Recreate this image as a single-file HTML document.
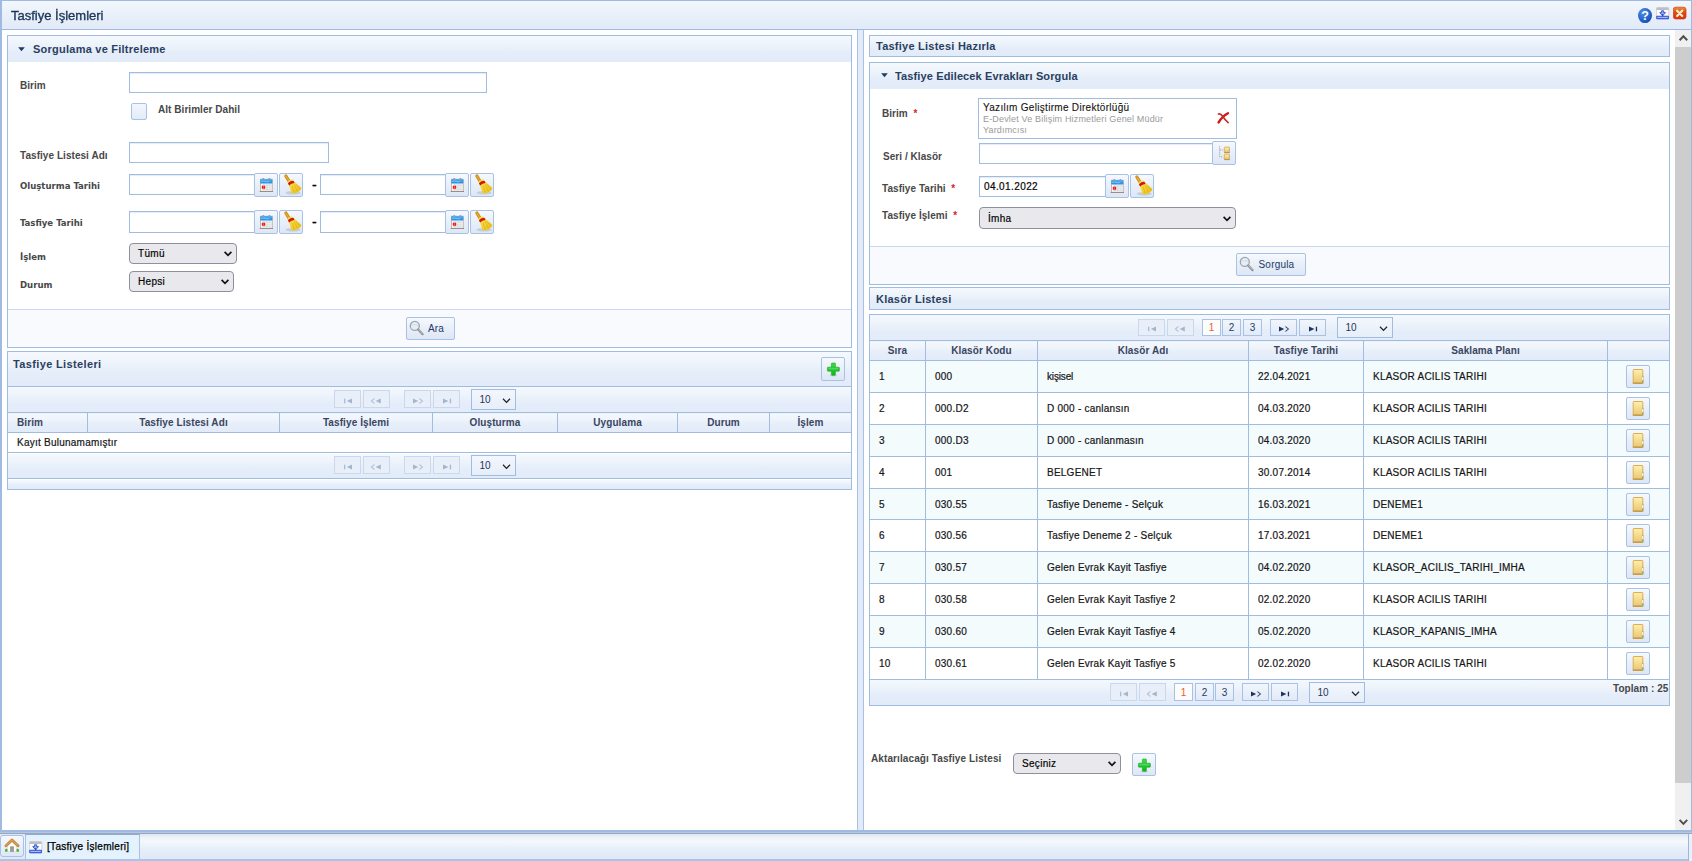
<!DOCTYPE html>
<html lang="tr">
<head>
<meta charset="utf-8">
<title>Tasfiye İşlemleri</title>
<style>
*{box-sizing:border-box;}
html,body{margin:0;padding:0;}
body{width:1692px;height:861px;overflow:hidden;background:#fff;position:relative;
 font-family:"Liberation Sans",Arial,sans-serif;font-size:10px;color:#222;}
.abs{position:absolute;}
/* window frame */
#win{position:absolute;left:0;top:0;width:1692px;height:832px;border:2px solid #a1bbe0;border-top-width:1px;border-right-width:1px;border-bottom-width:2px;background:#fff;}
#titlebar{position:absolute;left:2px;top:1px;width:1689px;height:29px;border-bottom:1px solid #9db9e2;
 background:linear-gradient(#f3f7fd 0%,#e9f0fa 50%,#e1eaf7 100%);}
#title{position:absolute;left:11px;top:8px;font-size:13px;line-height:16px;color:#1c3557;-webkit-text-stroke:0.35px #1c3557;will-change:transform;}
/* panels */
.panel{position:absolute;border:1px solid #a1bce1;background:#fff;}
.phead{position:absolute;left:0;top:0;right:0;background:linear-gradient(#f5f9fd 0%,#eef4fb 30%,#e4edf9 62%,#e2ecf8 100%);}
.ptitle{position:absolute;font-weight:bold;font-size:11px;color:#2a3f5f;white-space:nowrap;letter-spacing:0.24px;}
.tri{position:absolute;width:0;height:0;border-left:4px solid transparent;border-right:4px solid transparent;border-top:4px solid #2a4a7a;}
.lbl{position:absolute;font-weight:bold;font-size:10px;letter-spacing:0.05px;color:#484848;white-space:nowrap;line-height:13px;}
.lbl2{position:absolute;font-family:"DejaVu Sans Condensed","DejaVu Sans",sans-serif;font-weight:bold;font-size:9.5px;color:#484848;white-space:nowrap;line-height:13px;}
.inp{position:absolute;border:1px solid #a1bce1;background:#fff;box-shadow:inset 0 1px 1px #e4ecf7;}
.btn{position:absolute;border:1px solid #a9c1e4;border-radius:2px;background:linear-gradient(#f6f9fe 0%,#e8eff9 50%,#dde7f5 100%);}
.sel{position:absolute;border:1px solid #8f8f9d;border-radius:4px;background:#e9e9ed;font-size:10px;letter-spacing:0.3px;color:#000;-webkit-text-stroke:0.2px #111;white-space:nowrap;}
.sel span{position:absolute;top:0;line-height:19px;}
.sel svg{position:absolute;}
.pgsel{position:absolute;border:1px solid #a1bce1;background:linear-gradient(#f3f7fd,#e6eef9);font-size:10px;letter-spacing:0px;color:#26375a;}
.req{color:#d22;font-weight:bold;}
.foot{position:absolute;background:#f8fafd;border-top:1px solid #c9d8ee;}
.pbar{position:absolute;background:linear-gradient(#f5f9fd 0%,#eef4fb 30%,#e4edf9 62%,#e2ecf8 100%);}
.pgb{position:absolute;width:27px;height:18px;border:1px solid #c9d8ee;background:#e8eff9;}
.pgb.on{border-color:#a9c1e4;background:linear-gradient(#f1f6fc,#e1eaf7);}
.pgn{position:absolute;width:19px;height:17px;border:1px solid #a9c1e4;background:linear-gradient(#f1f6fc,#e1eaf7);font-size:10px;line-height:14px;text-align:center;color:#1e3a66;overflow:hidden;}
table.grid{position:absolute;border-collapse:collapse;table-layout:fixed;font-size:10px;}
table.grid th{border:1px solid #a1bce1;background:linear-gradient(#f5f9fd 0%,#eef4fb 30%,#e4edf9 62%,#e2ecf8 100%);font-weight:bold;color:#3a4560;text-align:center;padding:0;height:20px;font-size:10px;letter-spacing:0.1px;}
table.grid td{border:1px solid #a1bce1;padding:0 0 0 9px;color:#111;-webkit-text-stroke:0.2px #222;white-space:nowrap;letter-spacing:0.24px;}
</style>
</head>
<body>
<svg width="0" height="0" style="position:absolute">
<defs>
<linearGradient id="g-calblue" x1="0" y1="0" x2="0" y2="1"><stop offset="0" stop-color="#4fb0f5"/><stop offset="1" stop-color="#1f8be6"/></linearGradient>
<linearGradient id="g-fold" x1="0" y1="0" x2="0" y2="1"><stop offset="0" stop-color="#fff0a8"/><stop offset="1" stop-color="#e9c671"/></linearGradient>
<linearGradient id="g-plus" x1="0" y1="0" x2="0" y2="1"><stop offset="0" stop-color="#43d94d"/><stop offset="1" stop-color="#0fb51c"/></linearGradient>
<linearGradient id="g-broom" x1="0" y1="0" x2="1" y2="1"><stop offset="0" stop-color="#ffe85a"/><stop offset="1" stop-color="#e8b80e"/></linearGradient>
<radialGradient id="g-help" cx="0.35" cy="0.3" r="0.8"><stop offset="0" stop-color="#4f8fe6"/><stop offset="1" stop-color="#0f47b8"/></radialGradient>
<linearGradient id="g-close" x1="0" y1="0" x2="0" y2="1"><stop offset="0" stop-color="#f0902e"/><stop offset="0.45" stop-color="#e04a0c"/><stop offset="1" stop-color="#e62c00"/></linearGradient>
<!-- calendar: 24x24 button coords -->
<g id="ic-cal" transform="translate(-0.8,-1)">
 <rect x="5.6" y="18" width="13" height="1" fill="#6b5650"/>
 <rect x="6.2" y="6.2" width="11.8" height="12" fill="#fdfdfd" stroke="#b39c98" stroke-width="0.7"/>
 <rect x="6" y="6" width="12.2" height="4.6" rx="0.8" fill="url(#g-calblue)"/>
 <path d="M7 8.6 Q9 7.4 11 8.4 T15 8.2" stroke="#9fd4fb" stroke-width="0.7" fill="none"/>
 <rect x="8.3" y="5" width="1.6" height="2.8" rx="0.6" fill="#8b9bb0"/>
 <rect x="14.4" y="5" width="1.6" height="2.8" rx="0.6" fill="#8b9bb0"/>
 <rect x="8.3" y="11.4" width="8.9" height="5.8" fill="#cfd5d5"/>
 <path d="M11.3 11.4V17.2M14 11.4V17.2M16 11.4V17.2M8.3 13.3H17.2M8.3 15.2H17.2" stroke="#f4f6f6" stroke-width="0.7"/>
 <rect x="7.6" y="12.8" width="3.4" height="3" rx="0.6" fill="#f01818"/>
 <path d="M9.3 12.8V15.8" stroke="#ff8a8a" stroke-width="0.5"/>
</g>
<!-- broom -->
<g id="ic-broom" transform="translate(-0.3,-1)">
 <ellipse cx="13.5" cy="19.8" rx="7.5" ry="1.8" fill="#9aa4b4" opacity="0.4"/>
 <path d="M6.2 3 L9.6 8.6" stroke="#cf8d18" stroke-width="3.2" stroke-linecap="round"/>
 <path d="M6.2 3 L9.4 8.2" stroke="#e6ae42" stroke-width="1.1" stroke-linecap="round"/>
 <path d="M8.6 10.4 L13.6 7.8 L21.6 14.8 Q21.8 17 18 19 Q14.5 20.8 12 20.6 Z" fill="url(#g-broom)"/>
 <path d="M12.2 12.5 L14.5 19.6 M14.4 11.5 L18 18.6 M16 11 L20.6 16.6" stroke="#d9a90c" stroke-width="0.6" fill="none"/>
 <path d="M7.6 8.8 Q10 6.4 12.8 6.6 L13.3 7.9 Q10.6 8 8.4 10.2 Z" fill="#f2dc3a"/>
 <path d="M8.2 10.2 Q10.8 7.8 13.8 7.8 L14.8 10 Q11.6 10.2 9.4 12.6 Z" fill="#d21414"/>
</g>
<!-- magnifier 18x18 -->
<g id="ic-mag">
 <circle cx="6.8" cy="6.9" r="4.5" fill="#e3eefb" stroke="#a3a3a3" stroke-width="1.3"/>
 <path d="M3.6 6.4 Q6.8 4.6 10 6.4" fill="none" stroke="#c3d6ee" stroke-width="0.8"/>
 <path d="M10.2 10.4 L14.6 15.2" stroke="#8d8d8d" stroke-width="2.2" stroke-linecap="round"/>
 <path d="M10.6 10.6 L14.4 14.8" stroke="#c9c9c9" stroke-width="0.8" stroke-linecap="round"/>
</g>
<!-- plus 24x -->
<g id="ic-plus">
 <ellipse cx="11.4" cy="17.6" rx="3.8" ry="0.7" fill="#8e98aa" opacity="0.55"/>
 <path d="M9.4 5.6 Q9.4 5 10 5 H12.8 Q13.4 5 13.4 5.6 V9.2 H16.8 Q17.4 9.2 17.4 9.8 V12.6 Q17.4 13.2 16.8 13.2 H13.4 V16.6 Q13.4 17.2 12.8 17.2 H10 Q9.4 17.2 9.4 16.6 V13.2 H6 Q5.4 13.2 5.4 12.6 V9.8 Q5.4 9.2 6 9.2 H9.4 Z" fill="url(#g-plus)" stroke="#17a824" stroke-width="0.6"/>
 <path d="M6.6 10.8 H16.2" stroke="#7be884" stroke-width="0.8" opacity="0.8"/>
</g>
<!-- folder/file 24x23 -->
<g id="ic-fold" transform="translate(-1.2,-1)">
 <rect x="6.4" y="17.6" width="12" height="1.2" fill="#8e96a4" opacity="0.35"/>
 <rect x="7.4" y="4.5" width="9.6" height="14" rx="0.6" fill="url(#g-fold)" stroke="#d8a64c" stroke-width="0.9"/>
 <path d="M7.4 18 H17" stroke="#b98a34" stroke-width="0.9"/>
 <path d="M16 11.6 Q17 9.6 17.9 11.6 V17.4 H16 Z" fill="#d6b06a"/>
 <rect x="16.4" y="12" width="1" height="3.6" fill="#fff"/>
 <rect x="16.3" y="15.4" width="1.2" height="1.8" fill="#45b8d8"/>
</g>
<!-- tree 24x24 -->
<g id="ic-tree" transform="translate(-0.9,-1.3)">
 <path d="M7.6 5.6 V16.2 H11 M7.6 9.2 H11" stroke="#8f8f8f" stroke-width="0.9" stroke-dasharray="1 1" fill="none"/>
 <rect x="12.2" y="6.4" width="5.2" height="5.2" rx="0.5" fill="url(#g-fold)" stroke="#d8a64c" stroke-width="0.8"/>
 <rect x="12.2" y="13.4" width="5.2" height="5.2" rx="0.5" fill="url(#g-fold)" stroke="#d8a64c" stroke-width="0.8"/>
 <path d="M12 11.8 H17.8 M12 18.9 H17.8" stroke="#b98a34" stroke-width="0.8"/>
 <rect x="16.4" y="9" width="1" height="2" fill="#8fd2e4"/><rect x="16.4" y="16" width="1" height="2" fill="#8fd2e4"/>
</g>
<!-- red x 14x14 -->
<g id="ic-redx">
 <path d="M2.6 11.4 Q6 5.4 12 2.2" fill="none" stroke="#d11a1a" stroke-width="2.4" stroke-linecap="round"/>
 <path d="M2.4 3 Q4.6 2.2 6.4 5 Q9 9 12.2 11.6" fill="none" stroke="#c62a2a" stroke-width="1.6" stroke-linecap="round"/>
</g>
<!-- help 16x17 -->
<g id="ic-help">
 <ellipse cx="8" cy="8.6" rx="7" ry="7.5" fill="url(#g-help)"/>
 <text x="8" y="13" text-anchor="middle" font-family="Liberation Sans, sans-serif" font-weight="bold" font-size="12.5" fill="#fff">?</text>
</g>
<!-- minimize 14x13 -->
<g id="ic-min">
 <rect x="0.4" y="0.4" width="12.4" height="11.6" rx="1.2" fill="#fdfdfe" stroke="#c4c6cc" stroke-width="0.7"/>
 <path d="M0.6 1.4 Q0.6 0.4 1.6 0.4 H11.6 Q12.6 0.4 12.6 1.4 V3 H0.6 Z" fill="#bdbec4"/>
 <path d="M5.5 3.8 H7.7 V5.6 H9.5 L6.6 8.9 L3.7 5.6 H5.5 Z" fill="#8fa6ee" stroke="#3457cc" stroke-width="0.9" stroke-linejoin="round"/>
 <rect x="0.2" y="8.8" width="12.8" height="3.4" rx="0.8" fill="#3d5de0"/>
 <path d="M6.6 7.2 L6.6 9.4" stroke="#1e3bb8" stroke-width="1"/>
 <path d="M1.4 10.4 H11.8" stroke="#eef1ff" stroke-width="0.7"/>
</g>
<!-- close 14x14 -->
<g id="ic-close">
 <rect x="0.3" y="1.2" width="12.7" height="11.8" rx="2.4" fill="url(#g-close)" stroke="#d43220" stroke-width="0.7"/>
 <path d="M4.1 4.8 L9.2 10 M9.2 4.8 L4.1 10" stroke="#f1efd2" stroke-width="2.3" stroke-linecap="round"/>
</g>
<!-- home 24x22 (button-relative incl. border offset) -->
<g id="ic-home">
 <path d="M4 14.2 Q4 12.8 5.6 12.8 Q7.4 12.8 7.6 14.4 V15.8 H4 Z" fill="#4caf3c"/>
 <path d="M14.4 14.4 Q14.6 12.8 16.4 12.8 Q18 12.8 18 14.2 V15.8 H14.4 Z" fill="#4caf3c"/>
 <path d="M6.6 9.4 L11 5.6 L15.4 9.4 V15.8 H6.6 Z" fill="#fbfbf8" stroke="#c9c9c4" stroke-width="0.4"/>
 <rect x="9.2" y="10.4" width="3.6" height="5.4" fill="#8d8d8d"/>
 <rect x="9.8" y="11.4" width="2.4" height="4.4" fill="#9e9e9e"/>
 <path d="M5 9.8 L11 4 L17 9.8" fill="none" stroke="#c8873a" stroke-width="2.8" stroke-linejoin="round" stroke-linecap="round"/>
 <path d="M5.2 9.4 L11 3.9 L16.8 9.4" fill="none" stroke="#ecc58b" stroke-width="0.8" stroke-linejoin="round" stroke-dasharray="1.2 0.5"/>
</g>
<!-- paginator glyphs 27x18 -->
<g id="pg-first"><rect x="10.1" y="8.7" width="1.2" height="4.6"/><path d="M18 8.4 V13.6 L12.8 11 Z"/></g>
<g id="pg-prev"><path d="M12.2 8.5 L9.2 11 L12.2 13.5 L10.6 13.5 L7.6 11 L10.6 8.5 Z" opacity="0.85"/><path d="M17.8 8.4 V13.6 L12.6 11 Z"/></g>
<g id="pg-next"><path d="M9 8.4 V13.6 L14.2 11 Z"/><path d="M14.6 8.5 L17.6 11 L14.6 13.5 L16.2 13.5 L19.2 11 L16.2 8.5 Z" opacity="0.85"/></g>
<g id="pg-last"><path d="M10 8.4 V13.6 L15.4 11 Z"/><rect x="16.8" y="8.7" width="1.3" height="4.6"/></g>
</defs>
</svg>
<div id="win"></div>
<div id="titlebar"></div>
<div id="title">Tasfiye İşlemleri</div>
<!-- ===== LEFT: Sorgulama ve Filtreleme ===== -->
<div class="panel" style="left:7px;top:35px;width:845px;height:313px;">
  <div class="phead" style="height:26px;"></div>
  <svg class="abs" style="left:9.5px;top:11px;" width="8" height="6" viewBox="0 0 8 6"><path d="M0.2 0.3 H6.8 L3.5 4.3 Z" fill="#1e3a66"/></svg>
  <div class="ptitle" style="left:25px;top:6px;line-height:14px;">Sorgulama ve Filtreleme</div>
  <div class="foot" style="left:0;right:0;top:273px;height:38px;"></div>
</div>
<div class="lbl" style="left:20px;top:79px;">Birim</div>
<div class="inp" style="left:129px;top:72px;width:358px;height:21px;"></div>
<div class="abs" style="left:131px;top:103px;width:16px;height:17px;border:1px solid #a9c1e4;border-radius:2px;background:linear-gradient(#f3f7fd,#e2ebf8);"></div>
<div class="lbl" style="left:158px;top:103px;">Alt Birimler Dahil</div>
<div class="lbl" style="left:20px;top:149px;">Tasfiye Listesi Adı</div>
<div class="inp" style="left:129px;top:142px;width:200px;height:21px;"></div>

<div class="lbl2" style="left:20px;top:179px;">Oluşturma Tarihi</div>
<div class="inp" style="left:129px;top:174px;width:126px;height:21px;"></div>
<div class="btn cal" style="left:254px;top:173px;width:24px;height:24px;"><svg class="i-cal" width="24" height="24" viewBox="0 0 24 24"><use href="#ic-cal"/></svg></div>
<div class="btn" style="left:279px;top:173px;width:24px;height:24px;"><svg width="24" height="24" viewBox="0 0 24 24"><use href="#ic-broom"/></svg></div>
<div class="abs" style="left:312px;top:177.5px;font-size:14px;line-height:14px;color:#000;-webkit-text-stroke:0.3px #000;">-</div>
<div class="inp" style="left:320px;top:174px;width:126px;height:21px;"></div>
<div class="btn" style="left:445px;top:173px;width:24px;height:24px;"><svg width="24" height="24" viewBox="0 0 24 24"><use href="#ic-cal"/></svg></div>
<div class="btn" style="left:470px;top:173px;width:24px;height:24px;"><svg width="24" height="24" viewBox="0 0 24 24"><use href="#ic-broom"/></svg></div>

<div class="lbl2" style="left:20px;top:216px;">Tasfiye Tarihi</div>
<div class="inp" style="left:129px;top:211px;width:126px;height:22px;"></div>
<div class="btn" style="left:254px;top:210px;width:24px;height:24px;"><svg width="24" height="24" viewBox="0 0 24 24"><use href="#ic-cal"/></svg></div>
<div class="btn" style="left:279px;top:210px;width:24px;height:24px;"><svg width="24" height="24" viewBox="0 0 24 24"><use href="#ic-broom"/></svg></div>
<div class="abs" style="left:312px;top:215px;font-size:14px;line-height:14px;color:#000;-webkit-text-stroke:0.3px #000;">-</div>
<div class="inp" style="left:320px;top:211px;width:126px;height:22px;"></div>
<div class="btn" style="left:445px;top:210px;width:24px;height:24px;"><svg width="24" height="24" viewBox="0 0 24 24"><use href="#ic-cal"/></svg></div>
<div class="btn" style="left:470px;top:210px;width:24px;height:24px;"><svg width="24" height="24" viewBox="0 0 24 24"><use href="#ic-broom"/></svg></div>

<div class="lbl2" style="left:20px;top:250px;">İşlem</div>
<div class="sel" style="left:129px;top:243px;width:108px;height:21px;"><span style="left:8px;">Tümü</span><svg style="right:4px;top:7px;" width="8" height="6" viewBox="0 0 8 6"><path d="M0.6 0.9 L4 4.3 L7.4 0.9" fill="none" stroke="#111" stroke-width="1.7"/></svg></div>
<div class="lbl2" style="left:20px;top:278px;">Durum</div>
<div class="sel" style="left:129px;top:271px;width:105px;height:21px;"><span style="left:8px;line-height:19px;">Hepsi</span><svg style="right:4px;top:7px;" width="8" height="6" viewBox="0 0 8 6"><path d="M0.6 0.9 L4 4.3 L7.4 0.9" fill="none" stroke="#111" stroke-width="1.7"/></svg></div>

<div class="btn" style="left:406px;top:317px;width:49px;height:23px;"><svg class="abs" style="left:1.2px;top:1.2px;" width="18" height="18" viewBox="0 0 18 18"><use href="#ic-mag"/></svg><span class="abs" style="left:21px;top:4px;line-height:13px;color:#1e3a66;letter-spacing:0.1px;">Ara</span></div>

<!-- ===== LEFT: Tasfiye Listeleri ===== -->
<div class="panel" style="left:7px;top:351px;width:845px;height:139px;">
  <div class="phead" style="height:35px;border-bottom:1px solid #a1bce1;"></div>
  <div class="ptitle" style="left:5px;top:5px;line-height:14px;letter-spacing:0.36px;">Tasfiye Listeleri</div>
  <div class="pbar" style="left:0;right:0;top:35px;height:26px;"></div>
  <div class="pbar" style="left:0;right:0;top:102px;height:25px;border-bottom:1px solid #a1bce1;"></div>
  <div class="pbar" style="left:0;right:0;top:128px;height:9px;"></div>
</div>
<div class="btn" style="left:821px;top:357px;width:24px;height:24px;"><svg width="24" height="24" viewBox="0 0 24 24"><use href="#ic-plus"/></svg></div>

<table class="grid" style="left:7px;top:412px;width:844px;">
<colgroup><col style="width:80px"><col style="width:192px"><col style="width:153px"><col style="width:125px"><col style="width:120px"><col style="width:92px"><col style="width:82px"></colgroup>
<tr><th style="text-align:left;padding-left:9px;">Birim</th><th>Tasfiye Listesi Adı</th><th>Tasfiye İşlemi</th><th>Oluşturma</th><th>Uygulama</th><th>Durum</th><th>İşlem</th></tr>
<tr><td colspan="7" style="height:20px;background:#fff;padding-left:9px;">Kayıt Bulunamamıştır</td></tr>
</table>

<div class="pgb" style="left:334px;top:390px;height:18px;"><svg class="abs" style="left:-1px;top:-1px;" width="27" height="18" viewBox="0 0 27 18"><use href="#pg-first" fill="#a6b5cd"/></svg></div>
<div class="pgb" style="left:363px;top:390px;height:18px;"><svg class="abs" style="left:-1px;top:-1px;" width="27" height="18" viewBox="0 0 27 18"><use href="#pg-prev" fill="#a6b5cd"/></svg></div>
<div class="pgb" style="left:404px;top:390px;height:18px;"><svg class="abs" style="left:-1px;top:-1px;" width="27" height="18" viewBox="0 0 27 18"><use href="#pg-next" fill="#a6b5cd"/></svg></div>
<div class="pgb" style="left:433px;top:390px;height:18px;"><svg class="abs" style="left:-1px;top:-1px;" width="27" height="18" viewBox="0 0 27 18"><use href="#pg-last" fill="#a6b5cd"/></svg></div>
<div class="pgsel" style="left:471px;top:389px;width:45px;height:21px;"><span class="abs" style="left:7.5px;top:0;line-height:20px;">10</span><svg class="abs" style="right:4px;top:8px;" width="9" height="6" viewBox="0 0 9 6"><path d="M1 0.8 L4.5 4.4 L8 0.8" fill="none" stroke="#222" stroke-width="1.25"/></svg></div>
<div class="pgb" style="left:334px;top:456px;height:18px;"><svg class="abs" style="left:-1px;top:-1px;" width="27" height="18" viewBox="0 0 27 18"><use href="#pg-first" fill="#a6b5cd"/></svg></div>
<div class="pgb" style="left:363px;top:456px;height:18px;"><svg class="abs" style="left:-1px;top:-1px;" width="27" height="18" viewBox="0 0 27 18"><use href="#pg-prev" fill="#a6b5cd"/></svg></div>
<div class="pgb" style="left:404px;top:456px;height:18px;"><svg class="abs" style="left:-1px;top:-1px;" width="27" height="18" viewBox="0 0 27 18"><use href="#pg-next" fill="#a6b5cd"/></svg></div>
<div class="pgb" style="left:433px;top:456px;height:18px;"><svg class="abs" style="left:-1px;top:-1px;" width="27" height="18" viewBox="0 0 27 18"><use href="#pg-last" fill="#a6b5cd"/></svg></div>
<div class="pgsel" style="left:471px;top:455px;width:45px;height:21px;"><span class="abs" style="left:7.5px;top:0;line-height:20px;">10</span><svg class="abs" style="right:4px;top:8px;" width="9" height="6" viewBox="0 0 9 6"><path d="M1 0.8 L4.5 4.4 L8 0.8" fill="none" stroke="#222" stroke-width="1.25"/></svg></div>

<!-- splitter -->
<div class="abs" style="left:857px;top:30px;width:7px;height:800px;background:#e2ebf7;border-left:1px solid #a9c1e4;border-right:1px solid #a9c1e4;"></div>
<!-- scrollbar -->
<div class="abs" style="left:1675px;top:30px;width:16px;height:800px;background:#f0f0f0;"></div>
<div class="abs" style="left:1675px;top:47px;width:16px;height:736px;background:#cdcdcd;"></div>
<svg class="abs" style="left:1675px;top:30px;" width="16" height="17" viewBox="0 0 16 17"><path d="M4.6 10.3 L8.4 6.3 L12.2 10.3" fill="none" stroke="#505050" stroke-width="2"/></svg>
<svg class="abs" style="left:1675px;top:813px;" width="16" height="17" viewBox="0 0 16 17"><path d="M4.6 6.9 L8.4 10.9 L12.2 6.9" fill="none" stroke="#505050" stroke-width="2"/></svg>

<!-- ===== RIGHT: Tasfiye Listesi Hazırla ===== -->
<div class="panel" style="left:869px;top:35px;width:801px;height:22px;">
  <div class="phead" style="height:20px;"></div>
  <div class="ptitle" style="left:6px;top:3px;line-height:14px;">Tasfiye Listesi Hazırla</div>
</div>
<div class="panel" style="left:869px;top:62px;width:801px;height:223px;">
  <div class="phead" style="height:26px;"></div>
  <svg class="abs" style="left:10.5px;top:10px;" width="8" height="6" viewBox="0 0 8 6"><path d="M0.2 0.3 H6.8 L3.5 4.3 Z" fill="#1e3a66"/></svg>
  <div class="ptitle" style="left:25px;top:6px;line-height:14px;letter-spacing:0.13px;">Tasfiye Edilecek Evrakları Sorgula</div>
  <div class="foot" style="left:0;right:0;top:183px;height:38px;"></div>
</div>
<div class="lbl" style="left:882px;top:107px;">Birim&nbsp; <span class="req">*</span></div>
<div class="inp" style="left:978px;top:98px;width:259px;height:41px;box-shadow:none;"></div>
<div class="abs" style="left:983px;top:102px;line-height:12px;font-size:10px;color:#111;-webkit-text-stroke:0.1px #222;white-space:nowrap;letter-spacing:0.3px;">Yazılım Geliştirme Direktörlüğü</div>
<div class="abs" style="left:983px;top:114px;line-height:11px;font-size:9px;color:#9a9a9a;width:200px;letter-spacing:0.17px;">E-Devlet Ve Bilişim Hizmetleri Genel Müdür Yardımcısı</div>
<svg class="abs" style="left:1216px;top:111px;" width="14" height="14" viewBox="0 0 14 14"><use href="#ic-redx"/></svg>

<div class="lbl" style="left:883px;top:150px;">Seri / Klasör</div>
<div class="inp" style="left:979px;top:143px;width:234px;height:21px;"></div>
<div class="btn" style="left:1212px;top:141px;width:24px;height:24px;"><svg width="24" height="24" viewBox="0 0 24 24"><use href="#ic-tree"/></svg></div>

<div class="lbl" style="left:882px;top:182px;">Tasfiye Tarihi&nbsp; <span class="req">*</span></div>
<div class="inp" style="left:979px;top:176px;width:127px;height:21px;"></div>
<div class="abs" style="left:984px;top:180px;line-height:13px;font-size:10px;color:#000;-webkit-text-stroke:0.2px #111;letter-spacing:0.4px;">04.01.2022</div>
<div class="btn" style="left:1105px;top:174px;width:24px;height:24px;"><svg width="24" height="24" viewBox="0 0 24 24"><use href="#ic-cal"/></svg></div>
<div class="btn" style="left:1130px;top:174px;width:24px;height:24px;"><svg width="24" height="24" viewBox="0 0 24 24"><use href="#ic-broom"/></svg></div>

<div class="lbl" style="left:882px;top:209px;">Tasfiye İşlemi&nbsp; <span class="req">*</span></div>
<div class="sel" style="left:979px;top:207px;width:257px;height:22px;"><span style="left:8px;line-height:21px;">İmha</span><svg style="right:4px;top:7.5px;" width="8" height="6" viewBox="0 0 8 6"><path d="M0.6 0.9 L4 4.3 L7.4 0.9" fill="none" stroke="#111" stroke-width="1.7"/></svg></div>

<div class="btn" style="left:1236px;top:253px;width:70px;height:23px;"><svg class="abs" style="left:1.2px;top:1.2px;" width="18" height="18" viewBox="0 0 18 18"><use href="#ic-mag"/></svg><span class="abs" style="left:21.5px;top:4px;line-height:13px;color:#1e3a66;letter-spacing:0.2px;">Sorgula</span></div>

<div class="panel" style="left:869px;top:287px;width:801px;height:23px;">
  <div class="phead" style="height:21px;"></div>
  <div class="ptitle" style="left:6px;top:4px;line-height:14px;">Klasör Listesi</div>
</div>

<!-- grid -->
<div class="panel" style="left:869px;top:314px;width:801px;height:392px;">
  <div class="pbar" style="left:0;right:0;top:0;height:26px;"></div>
  <div class="pbar" style="left:0;right:0;top:364px;height:26px;"></div>
</div>
<table class="grid" id="kl" style="left:869px;top:340px;width:800px;">
<colgroup><col style="width:56px"><col style="width:112px"><col style="width:211px"><col style="width:115px"><col style="width:244px"><col style="width:62px"></colgroup>
<tr><th>Sıra</th><th>Klasör Kodu</th><th>Klasör Adı</th><th>Tasfiye Tarihi</th><th>Saklama Planı</th><th></th></tr>
<tr style="height:32px;background:#f3fbfd;"><td>1</td><td>000</td><td style="letter-spacing:-0.15px;">kişisel</td><td>22.04.2021</td><td>KLASOR ACILIS TARIHI</td><td style="padding:0;"><div class="btn" style="position:relative;left:18px;top:0;width:24px;height:23px;"><svg width="24" height="23" viewBox="0 0 24 23"><use href="#ic-fold"/></svg></div></td></tr>
<tr style="height:32px;background:#fff;"><td>2</td><td>000.D2</td><td>D 000 - canlansın</td><td>04.03.2020</td><td>KLASOR ACILIS TARIHI</td><td style="padding:0;"><div class="btn" style="position:relative;left:18px;top:0;width:24px;height:23px;"><svg width="24" height="23" viewBox="0 0 24 23"><use href="#ic-fold"/></svg></div></td></tr>
<tr style="height:32px;background:#f3fbfd;"><td>3</td><td>000.D3</td><td>D 000 - canlanmasın</td><td>04.03.2020</td><td>KLASOR ACILIS TARIHI</td><td style="padding:0;"><div class="btn" style="position:relative;left:18px;top:0;width:24px;height:23px;"><svg width="24" height="23" viewBox="0 0 24 23"><use href="#ic-fold"/></svg></div></td></tr>
<tr style="height:32px;background:#fff;"><td>4</td><td>001</td><td>BELGENET</td><td>30.07.2014</td><td>KLASOR ACILIS TARIHI</td><td style="padding:0;"><div class="btn" style="position:relative;left:18px;top:0;width:24px;height:23px;"><svg width="24" height="23" viewBox="0 0 24 23"><use href="#ic-fold"/></svg></div></td></tr>
<tr style="height:31px;background:#f3fbfd;"><td>5</td><td>030.55</td><td>Tasfiye Deneme - Selçuk</td><td>16.03.2021</td><td>DENEME1</td><td style="padding:0;"><div class="btn" style="position:relative;left:18px;top:0;width:24px;height:23px;"><svg width="24" height="23" viewBox="0 0 24 23"><use href="#ic-fold"/></svg></div></td></tr>
<tr style="height:32px;background:#fff;"><td>6</td><td>030.56</td><td>Tasfiye Deneme 2 - Selçuk</td><td>17.03.2021</td><td>DENEME1</td><td style="padding:0;"><div class="btn" style="position:relative;left:18px;top:0;width:24px;height:23px;"><svg width="24" height="23" viewBox="0 0 24 23"><use href="#ic-fold"/></svg></div></td></tr>
<tr style="height:32px;background:#f3fbfd;"><td>7</td><td>030.57</td><td>Gelen Evrak Kayit Tasfiye</td><td>04.02.2020</td><td>KLASOR_ACILIS_TARIHI_IMHA</td><td style="padding:0;"><div class="btn" style="position:relative;left:18px;top:0;width:24px;height:23px;"><svg width="24" height="23" viewBox="0 0 24 23"><use href="#ic-fold"/></svg></div></td></tr>
<tr style="height:32px;background:#fff;"><td>8</td><td>030.58</td><td>Gelen Evrak Kayit Tasfiye 2</td><td>02.02.2020</td><td>KLASOR ACILIS TARIHI</td><td style="padding:0;"><div class="btn" style="position:relative;left:18px;top:0;width:24px;height:23px;"><svg width="24" height="23" viewBox="0 0 24 23"><use href="#ic-fold"/></svg></div></td></tr>
<tr style="height:32px;background:#f3fbfd;"><td>9</td><td>030.60</td><td>Gelen Evrak Kayit Tasfiye 4</td><td>05.02.2020</td><td>KLASOR_KAPANIS_IMHA</td><td style="padding:0;"><div class="btn" style="position:relative;left:18px;top:0;width:24px;height:23px;"><svg width="24" height="23" viewBox="0 0 24 23"><use href="#ic-fold"/></svg></div></td></tr>
<tr style="height:32px;background:#fff;"><td>10</td><td>030.61</td><td>Gelen Evrak Kayit Tasfiye 5</td><td>02.02.2020</td><td>KLASOR ACILIS TARIHI</td><td style="padding:0;"><div class="btn" style="position:relative;left:18px;top:0;width:24px;height:23px;"><svg width="24" height="23" viewBox="0 0 24 23"><use href="#ic-fold"/></svg></div></td></tr>
</table>

<div class="lbl" style="left:1613px;top:682px;">Toplam : 25</div>
<div class="lbl" style="left:871px;top:752px;letter-spacing:0.1px;">Aktarılacağı Tasfiye Listesi</div>
<div class="sel" style="left:1013px;top:753px;width:108px;height:21px;"><span style="left:8px;">Seçiniz</span><svg style="right:4px;top:7px;" width="8" height="6" viewBox="0 0 8 6"><path d="M0.6 0.9 L4 4.3 L7.4 0.9" fill="none" stroke="#111" stroke-width="1.7"/></svg></div>
<div class="btn" style="left:1132px;top:753px;width:24px;height:23px;"><svg width="24" height="23" viewBox="0 0 24 23"><use href="#ic-plus"/></svg></div>

<div class="pgb" style="left:1138px;top:319px;height:17px;"><svg class="abs" style="left:-1px;top:-2px;" width="27" height="18" viewBox="0 0 27 18"><use href="#pg-first" fill="#a6b5cd"/></svg></div>
<div class="pgb" style="left:1167px;top:319px;height:17px;"><svg class="abs" style="left:-1px;top:-2px;" width="27" height="18" viewBox="0 0 27 18"><use href="#pg-prev" fill="#a6b5cd"/></svg></div>
<div class="pgb on" style="left:1270px;top:319px;height:17px;"><svg class="abs" style="left:-1px;top:-2px;" width="27" height="18" viewBox="0 0 27 18"><use href="#pg-next" fill="#1e3560"/></svg></div>
<div class="pgb on" style="left:1299px;top:319px;height:17px;"><svg class="abs" style="left:-1px;top:-2px;" width="27" height="18" viewBox="0 0 27 18"><use href="#pg-last" fill="#1e3560"/></svg></div>
<div class="pgn" style="left:1202px;top:319px;height:17px;line-height:15px;background:#fcfcfc;color:#e8622a;">1</div>
<div class="pgn" style="left:1222px;top:319px;height:17px;line-height:15px;">2</div>
<div class="pgn" style="left:1243px;top:319px;height:17px;line-height:15px;">3</div>
<div class="pgsel" style="left:1337px;top:317px;width:56px;height:21px;"><span class="abs" style="left:7.5px;top:0;line-height:20px;">10</span><svg class="abs" style="right:4px;top:8px;" width="9" height="6" viewBox="0 0 9 6"><path d="M1 0.8 L4.5 4.4 L8 0.8" fill="none" stroke="#222" stroke-width="1.25"/></svg></div>
<div class="pgb" style="left:1110px;top:683px;height:18px;"><svg class="abs" style="left:-1px;top:-1px;" width="27" height="18" viewBox="0 0 27 18"><use href="#pg-first" fill="#a6b5cd"/></svg></div>
<div class="pgb" style="left:1139px;top:683px;height:18px;"><svg class="abs" style="left:-1px;top:-1px;" width="27" height="18" viewBox="0 0 27 18"><use href="#pg-prev" fill="#a6b5cd"/></svg></div>
<div class="pgb on" style="left:1242px;top:683px;height:18px;"><svg class="abs" style="left:-1px;top:-1px;" width="27" height="18" viewBox="0 0 27 18"><use href="#pg-next" fill="#1e3560"/></svg></div>
<div class="pgb on" style="left:1271px;top:683px;height:18px;"><svg class="abs" style="left:-1px;top:-1px;" width="27" height="18" viewBox="0 0 27 18"><use href="#pg-last" fill="#1e3560"/></svg></div>
<div class="pgn" style="left:1174px;top:683px;height:18px;line-height:18px;background:#fcfcfc;color:#e8622a;">1</div>
<div class="pgn" style="left:1195px;top:683px;height:18px;line-height:18px;">2</div>
<div class="pgn" style="left:1215px;top:683px;height:18px;line-height:18px;">3</div>
<div class="pgsel" style="left:1309px;top:682px;width:56px;height:21px;"><span class="abs" style="left:7.5px;top:0;line-height:20px;">10</span><svg class="abs" style="right:4px;top:8px;" width="9" height="6" viewBox="0 0 9 6"><path d="M1 0.8 L4.5 4.4 L8 0.8" fill="none" stroke="#222" stroke-width="1.25"/></svg></div>

<!-- ===== taskbar ===== -->
<div class="abs" style="left:0;top:832px;width:1692px;height:1px;background:#b9c6d8;"></div>
<div class="abs" style="left:0;top:833px;width:1692px;height:28px;background:linear-gradient(#dde4ee 0%,#eef3fa 14%,#f4f8fd 30%,#e6eef9 60%,#dfe9f6 100%);border-top:1px solid #8fa9cf;border-bottom:2px solid #a9c4e8;"></div>
<div class="abs" style="left:1688px;top:834px;width:1px;height:27px;background:#9db8df;"></div>
<div class="abs" style="left:1689px;top:834px;width:3px;height:27px;background:#e9f0fa;"></div>
<div class="btn" style="left:0px;top:835px;width:24px;height:22px;border-radius:3px;"><svg class="abs" style="left:0;top:0" width="22" height="20" viewBox="0 0 22 20"><use href="#ic-home"/></svg></div>
<div class="abs" style="left:25px;top:834px;width:115px;height:25px;border-left:1px solid #a9c1e4;border-right:1px solid #a9c1e4;border-top:1px solid #8fa9cf;background:#e3f2fd;"></div>
<svg class="abs" style="left:29px;top:841px;" width="14" height="13" viewBox="0 0 14 13"><use href="#ic-min"/></svg>
<div class="abs" style="left:47px;top:840px;font-size:10px;line-height:13px;color:#000;-webkit-text-stroke:0.25px #000;white-space:nowrap;letter-spacing:0.3px;">[Tasfiye İşlemleri]</div>
<!-- title icons -->
<svg class="abs" style="left:1637px;top:7px;" width="16" height="17" viewBox="0 0 16 17"><use href="#ic-help"/></svg>
<svg class="abs" style="left:1656px;top:7px;" width="14" height="13" viewBox="0 0 14 13"><use href="#ic-min"/></svg>
<svg class="abs" style="left:1673px;top:6px;" width="14" height="14" viewBox="0 0 14 14"><use href="#ic-close"/></svg>

</body>
</html>
